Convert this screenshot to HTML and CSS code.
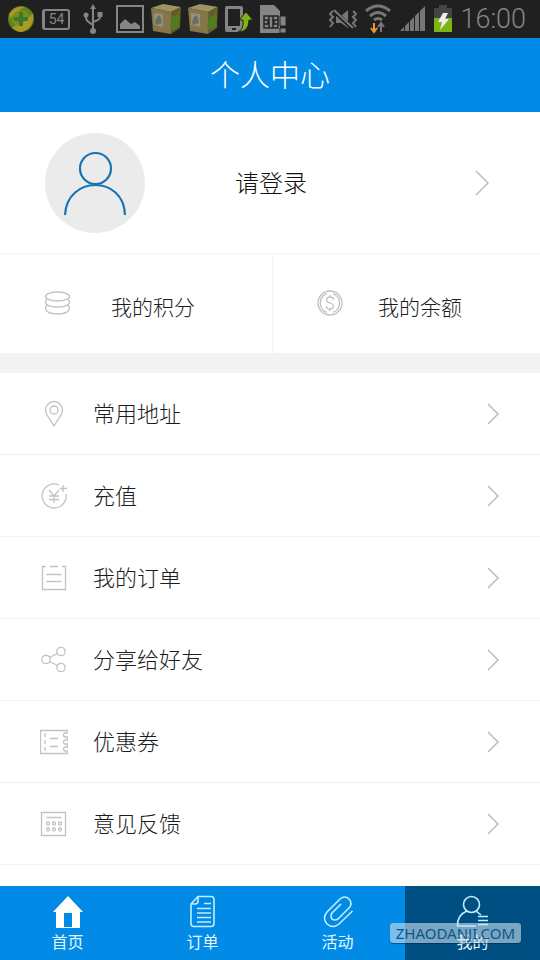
FILE: index.html
```html
<!DOCTYPE html>
<html lang="zh-CN">
<head>
<meta charset="utf-8">
<meta name="viewport" content="width=device-width, initial-scale=1">
<title>个人中心</title>
<link rel="stylesheet" href="styles.css">
</head>
<body>
<div class="status">
  <div class="status-group">
    <svg width="28" height="28" viewBox="0 0 28 28"><defs><radialGradient id="ball"><stop offset="0" stop-color="#5f8a22"/><stop offset=".5" stop-color="#7f9020"/><stop offset="1" stop-color="#4f7c1c"/></radialGradient></defs><circle cx="14" cy="14" r="13" fill="url(#ball)"/><path d="M2 9Q8 0 18 2Q8 6 3 14zM5 22Q16 20 26 8Q28 22 15 27Q9 27 5 22" fill="#c09c20" opacity=".8"/><path d="M12 7h4v5h5v4h-5v5h-4v-5H7v-4h5z" fill="#3e7829"/></svg>
    <span class="battery-level">54</span>
    <svg class="usb" width="20" height="30" viewBox="0 0 20 30" fill="none" stroke="#858585" stroke-width="2"><path d="M10 4v22M3 10v4q0 3 7 7M17 10v3q0 3-7 5"/><path d="M10 0l3 5H7zM14.500 8h5v5h-5z" fill="#858585" stroke="none"/><circle cx="3" cy="11" r="2.500" fill="#858585" stroke="none"/><circle cx="10" cy="27" r="3" fill="#858585" stroke="none"/></svg>
    <svg width="28" height="28" viewBox="0 0 28 28"><path d="M1 1h26v26H1z" fill="none" stroke="#858585" stroke-width="2"/><path d="M4 24v-5l5-5 6 5 4-2 5 4v3z" fill="#858585"/></svg>
    <svg width="30" height="30" viewBox="0 0 30 30"><path d="M0 4L12 0l18 3-10 5z" fill="#9d9463"/><path d="M0 4l20 4v22L2 27z" fill="#857547"/><path d="M20 8l10-5-1 21-9 6z" fill="#66592f"/><path d="M3 9l9 1v13l-9-2z" fill="#918f80"/><path d="M4 18l2-5 3-2 2 8-3 1-3 1" fill="#68705c"/><path d="M19 25l1-9q2-4 6-5l3 1-1 11-5 3z" fill="#55791f"/><path d="M20 10l2 4m6-7l-1 5" stroke="#55791f" stroke-width="1.500"/></svg>
    <svg width="30" height="30" viewBox="0 0 30 30"><path d="M0 4L12 0l18 3-10 5z" fill="#9d9463"/><path d="M0 4l20 4v22L2 27z" fill="#857547"/><path d="M20 8l10-5-1 21-9 6z" fill="#66592f"/><path d="M3 9l9 1v13l-9-2z" fill="#918f80"/><path d="M4 18l2-5 3-2 2 8-3 1-3 1" fill="#68705c"/><path d="M19 25l1-9q2-4 6-5l3 1-1 11-5 3z" fill="#55791f"/><path d="M20 10l2 4m6-7l-1 5" stroke="#55791f" stroke-width="1.500"/></svg>
    <svg width="28" height="28" viewBox="0 0 28 28"><path fill-rule="evenodd" d="M2 1h14q2 0 2 2v22q0 2-2 2H2q-2 0-2-2V3q0-2 2-2zm1 3v17h12V4zm4 19v2h4v-2z" fill="#858585"/><path d="M13 27q6-2 5-12h-4l7-8 7 8h-4q0 12-11 12" fill="#80b414" stroke="#242424"/></svg>
    <svg width="28" height="30" viewBox="0 0 28 30"><path d="M0 1h14l6 6v22H0z" fill="#858585"/><path d="M4 12h14v12H4zM4 16h4v4H4m14-4h-4v4h4M9 12v12m4-12v12" fill="none" stroke="#252525" stroke-width="1.500"/><path d="M20 12h6v10h-6zm0 12h6v5h-6z" fill="#858585" stroke="#222"/></svg>
  </div>
  <div class="status-group">
    <svg width="28" height="22" viewBox="0 0 28 22"><path d="M7 8h5l7-6v18l-7-5H7z" fill="#777"/><path d="M5 3l18 17" stroke="#202020" stroke-width="4"/><path d="M5 2l19 18M4 3L1 6l3 3-3 3 3 3-3 4M24 3l3 3-3 3 3 3-3 3 3 4" fill="none" stroke="#777" stroke-width="2"/></svg>
    <svg class="wifi" width="26" height="30" viewBox="0 0 26 30" fill="none" stroke="#777" stroke-width="3"><path d="M1 7q12-10 24 0M5 12q8-7 16 0M9 16q4-3 8 0"/><path d="M16 28v-8m-3 3l3-4 3 4" stroke-width="2"/><path d="M9 19v8m-3-3l3 4 3-4" stroke="#e99a35" stroke-width="2"/></svg>
    <svg width="26" height="26" viewBox="0 0 26 26"><path d="M0 25l4-4v4zM5 20l4-4v9H5zM10 15l4-4v14h-4zM15 10l4-4v19h-4zM20 5l5-5v25h-5z" fill="#777"/></svg>
    <svg width="18" height="28" viewBox="0 0 18 28"><path d="M5 0h8v3h5v10H0V3h5z" fill="#444"/><path d="M0 13h18v14H0z" fill="#80b414"/><path d="M9 8L4 17h4l-2 8 9-11h-4l3-6z" fill="#eee"/></svg>
    <time class="clock">16:00</time>
  </div>
</div>
<header class="header"><h1>个人中心</h1></header>
<main class="main">
  <a class="profile" href="#login">
    <svg width="100" height="100" viewBox="0 0 100 100"><circle cx="50" cy="50" r="50" fill="#ebebeb"/><g fill="none" stroke="#1873b3" stroke-width="2.200"><circle cx="50.500" cy="35.500" r="15.500"/><path d="M20 82C22 42 79 42 80 82"/></g></svg>
    <span class="login">请登录</span>
    <svg class="chevron-large" width="16" height="26" viewBox="0 0 16 26"><path d="M2 1l12 12L2 25"/></svg>
  </a>
  <div class="stats">
    <a class="stat" href="#points">
      <svg class="icon" width="28" height="28" viewBox="0 0 28 28"><ellipse cx="14.500" cy="6.500" rx="12" ry="4.500"/><path d="M4 9.500C0 13 4 17 14.500 17S29 13 25 9.500M4 15C0 19 4 24 14.500 24S29 19 25 15"/></svg>
      <span>我的积分</span>
    </a>
    <a class="stat" href="#balance">
      <svg class="icon" width="28" height="28" viewBox="0 0 28 28"><circle cx="14" cy="13" r="12"/><path d="M11 22.500A10 10 0 0 1 11 3.600M17 3.600a10 10 0 0 1 0 18.800M17.500 10c0-4-7-4-7 0s7 2 7 6-7 4-7 0M14 5v2m0 12v2"/></svg>
      <span>我的余额</span>
    </a>
  </div>
  <nav class="menu">
    <a class="row" href="#address"><svg class="icon" width="28" height="28" viewBox="0 0 28 28"><path d="M14 26C10 19 5.500 15 5.500 10a8.500 8.500 0 0 1 17 0c0 5-4.500 9-8.500 16z"/><circle cx="14" cy="10" r="4"/></svg><span>常用地址</span><svg class="chevron" width="14" height="22" viewBox="0 0 14 22"><path d="M2 1l10 10L2 21"/></svg></a>
    <a class="row" href="#recharge"><svg class="icon" width="28" height="28" viewBox="0 0 28 28"><path d="M19 3A12 12 0 1 0 26 12M23 3v7m-3-3.500h7M9 8l5 6 5-6M14 14v7M9 14h10M9 17.500h10"/></svg><span>充值</span><svg class="chevron" width="14" height="22" viewBox="0 0 14 22"><path d="M2 1l10 10L2 21"/></svg></a>
    <a class="row" href="#orders"><svg class="icon" width="28" height="28" viewBox="0 0 28 28"><path d="M6 2.500H2.500v23h23v-23H22M10 2.500h8M6.500 10.500h15M6.500 17.500h15"/></svg><span>我的订单</span><svg class="chevron" width="14" height="22" viewBox="0 0 14 22"><path d="M2 1l10 10L2 21"/></svg></a>
    <a class="row" href="#share"><svg class="icon" width="28" height="28" viewBox="0 0 28 28"><circle cx="6" cy="13.500" r="4.200"/><circle cx="21" cy="5.500" r="4.200"/><circle cx="21" cy="21.500" r="4.200"/><path d="M9.500 11.500l8-4m-8 8l8 4"/></svg><span>分享给好友</span><svg class="chevron" width="14" height="22" viewBox="0 0 14 22"><path d="M2 1l10 10L2 21"/></svg></a>
    <a class="row" href="#coupons"><svg class="icon" width="28" height="28" viewBox="0 0 28 28"><path d="M27.500 5V2.500h-27v23h27V23M27.500 5h-3q-2 2 0 4h3v3h-3q-2 2 0 4h3v3h-3q-2 2 0 4h3M10 10.500h8M10 18.500h8M5 5v4m0 3v4m0 3v4"/></svg><span>优惠券</span><svg class="chevron" width="14" height="22" viewBox="0 0 14 22"><path d="M2 1l10 10L2 21"/></svg></a>
    <a class="row" href="#feedback"><svg class="icon" width="28" height="28" viewBox="0 0 28 28"><path d="M1.500 2.500h24v23h-24zM6.500 7.500h15"/><circle cx="8" cy="13.500" r="1.500"/><circle cx="14" cy="13.500" r="1.500"/><circle cx="20" cy="13.500" r="1.500"/><circle cx="8" cy="19.500" r="1.500"/><circle cx="14" cy="19.500" r="1.500"/><circle cx="20" cy="19.500" r="1.500"/></svg><span>意见反馈</span><svg class="chevron" width="14" height="22" viewBox="0 0 14 22"><path d="M2 1l10 10L2 21"/></svg></a>
  </nav>
</main>
<nav class="tabs">
  <a class="tab" href="#home"><svg width="34" height="34" viewBox="0 0 34 34"><path fill-rule="evenodd" d="M17 1l15 16h-3v16H5V17H2zm-4 17v14h8V18z" fill="#fff"/></svg><span>首页</span></a>
  <a class="tab" href="#order"><svg class="line" width="34" height="34" viewBox="0 0 34 34"><path d="M12 1.500h13q3 0 3 3v24q0 3-3 3H8q-3 0-3-3V9zM12 2v4q0 3-3 3H5M18 8.500h7M11 13.500h14M11 18h14M11 22.500h14M11 27h14"/></svg><span>订单</span></a>
  <a class="tab" href="#activity"><svg class="line" width="34" height="34" viewBox="0 0 34 34"><path d="M31.500 16L18 29q-6 5-12 0-5-6 0-12L19 4q5-4 9 0 4 5 0 9L17 24q-3 2-6 0-2-3 0-6l9-9"/></svg><span>活动</span></a>
  <a class="tab tab-active" href="#me" aria-current="page"><svg class="line" width="34" height="34" viewBox="0 0 34 34"><circle cx="15.500" cy="9.500" r="8"/><path d="M11 16Q1 20 1.500 31H20M20 16l5 4M22 21.500h10M22 25.500h10M22 29.500h10"/></svg><span>我的</span></a>
  <span class="watermark">ZHAODANJI.COM</span>
</nav>
</body>
</html>
```

FILE: styles.css
```css
* { box-sizing: border-box; }

body {
  display: flex;
  flex-direction: column;
  min-height: 100vh;
  margin: 0;
  background: #fff;
  color: #1c1c1c;
  font-family: Roboto, "Noto Sans CJK SC", sans-serif;
  font-weight: 300;
}

a { color: inherit; text-decoration: none; }
svg { display: block; flex: none; }

.status {
  display: flex;
  align-items: center;
  justify-content: space-between;
  height: 38px;
  padding: 0 14px 0 7px;
  background: #202020;
  color: #858585;
}
.status-group { display: flex; align-items: center; gap: 7px; }
.status-group + .status-group { gap: 8px; }
.battery-level {
  width: 28px;
  border: 2px solid #858585;
  border-left-width: 3px;
  border-radius: 3px;
  font-size: 14px;
  font-weight: 400;
  line-height: 17px;
  text-align: center;
}
.usb { margin: 0 6px; }
.wifi { margin-right: 1px; }
.clock { font-size: 27px; line-height: 36px; }

.header {
  display: flex;
  align-items: center;
  justify-content: center;
  height: 74px;
  padding-top: 2px;
  background: #028be6;
  color: #fff;
}
.header h1 { margin: 0; font-size: 30px; font-weight: 300; line-height: 40px; }

.main { flex: 1; }

.profile {
  display: flex;
  align-items: center;
  height: 142px;
  padding: 0 50px 0 45px;
  border-bottom: 1px solid #f4f4f4;
  color: #111;
}
.login { flex: 1; margin-left: 90px; padding-top: 2px; font-size: 24px; line-height: 36px; }
.chevron, .chevron-large { fill: none; stroke: #bdbdbd; stroke-width: 1.5; }

.stats { display: grid; grid-template-columns: 272fr 268fr; height: 99px; }
.stat {
  display: flex;
  align-items: center;
  gap: 40px;
  padding: 0 43px;
  font-size: 21px;
  line-height: 32px;
}
.stat span { padding-top: 8px; }
.stat + .stat { gap: 34px; border-left: 1px solid #f4f4f4; }
.icon { fill: none; stroke: #c2c2c2; stroke-width: 1.3; }

.menu { border-top: 20px solid #f3f3f3; }
.row {
  display: flex;
  align-items: center;
  height: 82px;
  padding: 0 40px;
  border-bottom: 1px solid #f1f1f1;
  font-size: 22px;
  line-height: 32px;
}
.row span { flex: 1; margin-left: 25px; padding-top: 2px; }

.tabs {
  position: relative;
  display: flex;
  height: 74px;
  background: #028be6;
  color: #e4f7ff;
}
.tab {
  display: flex;
  flex: 1;
  flex-direction: column;
  align-items: center;
  padding-top: 9px;
  font-size: 16px;
  font-weight: 400;
  line-height: 28px;
}
.tab-active { background: #004f82; }
.line { fill: none; stroke: #c5edff; stroke-width: 1.6; }
.watermark {
  position: absolute;
  right: 19px;
  bottom: 17px;
  padding: 0 6px;
  border-radius: 3px;
  background: rgba(205, 225, 238, .6);
  box-shadow: 0 1px 1px rgba(0, 30, 60, .5);
  color: #07578b;
  font-family: "Noto Sans", sans-serif;
  font-size: 15px;
  font-weight: 400;
  line-height: 20px;
}
```
